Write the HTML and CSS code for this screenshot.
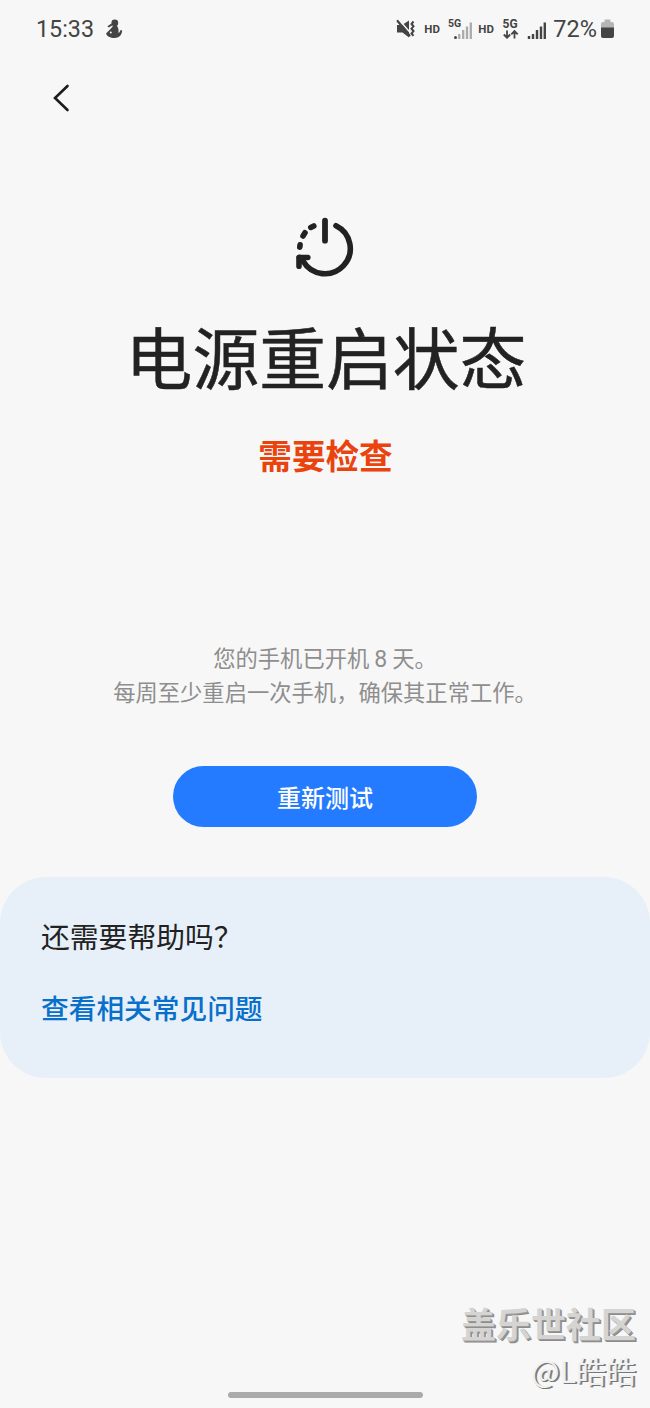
FILE: index.html
```html
<!DOCTYPE html>
<html lang="zh-CN">

<head>
    <meta charset="UTF-8">
    <meta name="viewport" content="width=device-width, initial-scale=1.0">
    <title>电源重启状态</title>
    <link rel="stylesheet" href="styles.css">
</head>

<body>
    <!-- Status bar -->
    <div class="status-bar">
        <span class="time">15:33</span>
        <svg class="notification" width="18" height="21" viewBox="0 0 18 21" fill="#444">
            <circle cx="9.8" cy="4" r="3.4" />
            <path d="M2.4 7.3 6.5 4.6l1.2 1.7-4 2.3z" />
            <path d="M8 7h4c1.600 2 1.800 4.500 1.500 7 1.200-.6 1.600-1.600 2-3l1.700.5c-.2 4.500-3.200 7.500-7.700 7.500C5.500 19 2 17.500 1 14.500L5.500 10z" />
            <circle cx="5.800" cy="13.600" r="1" fill="#f7f7f7" />
        </svg>
        <div class="status-icons">
            <svg class="mute" width="20" height="20" viewBox="0 0 20 20">
                <path d="M2 6h5l7-4.500v17L7.500 13.500H2z" fill="#444" />
                <path d="M4 .8 16 14.500" stroke="#f7f7f7" stroke-width="1.500" />
                <path d="M2.600 2 14.500 16.500" stroke="#444" stroke-width="2.200" stroke-linecap="round" />
                <path d="M18.500 2.500l-2 2.400 2 2.400-2 2.400 2 2.400-2 2.400 2 2.400" fill="none" stroke="#444" stroke-width="2" />
            </svg>
            <span class="hd">HD</span>
            <svg class="sim1" width="25" height="24" viewBox="0 0 25 24">
                <text x="0" y="10" class="net-label">5G</text>
                <circle cx="7.500" cy="20.500" r="1.500" fill="#444" />
                <path d="M11.300 22v-5M15.200 22v-9M19 22V9.500M22.800 22V5.500" stroke="#aaa" stroke-width="2.300" />
            </svg>
            <span class="hd">HD</span>
            <svg class="sim2" width="18" height="24" viewBox="0 0 18 24">
                <text x="0.5" y="11" class="net-label big">5G</text>
                <path d="M5 13.500v7M1.800 17.500l3.200 3.200 3.200-3.200M12.500 21.500v-7M9.300 17.300l3.200-3.200 3.200 3.200" fill="none" stroke="#444" stroke-width="1.800" />
            </svg>
            <svg class="bars" width="20" height="24" viewBox="0 0 20 24">
                <path d="M2 22v-3M6 22v-5M10 22v-9M14 22V9.500M17.800 22V5.500" stroke="#444" stroke-width="2.400" />
            </svg>
            <span class="percent">72%</span>
            <svg width="13" height="20" viewBox="0 0 13 20">
                <path d="M0 9V5q0-2 2-2h1.500V1.500Q3.500.5 4.500.5h4q1 0 1 1V3H11q2 0 2 2v4z" fill="#b5b5b5" />
                <path d="M0 8.500h13V17q0 2-2 2H2q-2 0-2-2z" fill="#444" />
            </svg>
        </div>
    </div>

    <div class="toolbar">
        <svg width="20" height="30" viewBox="0 0 20 30">
            <path d="M15.500 3 3 15l12.500 12" fill="none" stroke="#1c1c1c" stroke-width="2.600" stroke-linecap="round" />
        </svg>
    </div>

    <!-- Test result -->
    <div class="result">
        <svg class="restart-icon" width="60" height="60" viewBox="0 0 60 60" fill="none" stroke="#222" stroke-width="5.600" stroke-linecap="round" stroke-linejoin="round">
            <path d="M30 3.700v20" stroke-width="5.800" />
            <path d="M41 8.700A25.300 25.300 0 1 1 8.100 44.200L4.500 40.500" />
            <path d="M12.800 40.500H4v8.700" />
            <path d="M4.800 30.200l.3-2.400M8 19l2-3.200M15.800 10.400l3-1.500" />
        </svg>
        <h1>电源重启状态</h1>
        <p class="state">需要检查</p>
        <p class="description">您的手机已开机 <span class="days">8</span> 天。<br>每周至少重启一次手机，确保其正常工作。</p>
        <button class="retest">重新测试</button>
    </div>

    <!-- Help card -->
    <div class="help">
        <h2>还需要帮助吗？</h2>
        <a class="faq-link">查看相关常见问题</a>
    </div>

    <div class="watermark">
        <div class="community">盖乐世社区</div>
        <div class="author">@L皓皓</div>
    </div>
    <div class="home-bar"></div>
</body>

</html>
```

FILE: styles.css
```css
body {
    font-family: "Noto Sans CJK SC", sans-serif;
    margin: 0;
    height: 1408px;
    display: flex;
    flex-direction: column;
    background-color: #f7f7f7;
    color: #222;
    overflow: hidden;
}

svg {
    display: block;
    flex: none;
}

.status-bar {
    display: flex;
    align-items: center;
    height: 58px;
    padding: 0 36px;
    font-family: Roboto, sans-serif;
    color: #444;
}

.time {
    font-size: 23.3px;
    line-height: 28px;
    width: 69px;
}

.status-icons {
    display: flex;
    align-items: center;
    margin-left: auto;
}

.mute {
    margin-right: 9px;
}

.hd {
    width: 16px;
    font-size: 11.5px;
    font-weight: 700;
}

.sim1 {
    margin: 0 5px 0 8px;
}

.sim2 {
    margin: 0 7px 0 8px;
}

.net-label {
    font-family: Roboto, sans-serif;
    font-size: 10.5px;
    font-weight: 700;
    fill: #444;
}

.net-label.big {
    font-size: 12px;
}

.percent {
    margin: 0 4px 0 6px;
    font-size: 23.5px;
    line-height: 28px;
}

.toolbar {
    height: 77px;
    padding: 25px 0 0 52px;
    box-sizing: border-box;
}

.result {
    display: flex;
    flex-direction: column;
    align-items: center;
    padding-top: 82px;
    text-align: center;
}

h1 {
    margin: 30px 0 0;
    padding-left: 2px;
    font-size: 66.8px;
    line-height: 96px;
    font-weight: 400;
    -webkit-text-stroke: 0.5px #222;
}

.state {
    margin: 28px 0 0;
    padding-left: 1px;
    font-size: 33.6px;
    line-height: 48px;
    font-weight: 700;
    color: #ea430d;
}

.description {
    margin: 161px 0 0;
    font-size: 22.3px;
    line-height: 34px;
    font-weight: 400;
    color: #8e8e8e;
}

.days {
    font-family: Roboto, sans-serif;
    font-size: 23px;
    line-height: 1;
}

.retest {
    width: 304px;
    height: 61px;
    margin-top: 58px;
    padding: 0;
    border: none;
    border-radius: 31px;
    background-color: #247bff;
    color: #fff;
    font-family: inherit;
    font-size: 24px;
    font-weight: 500;
}

.help {
    height: 201px;
    margin-top: 50px;
    padding: 38px 41px 0;
    box-sizing: border-box;
    border-radius: 46px;
    background-color: #e7f0f8;
}

h2 {
    margin: 0;
    font-size: 28.8px;
    line-height: 42px;
    font-weight: 400;
}

.faq-link {
    display: block;
    margin-top: 30px;
    font-size: 27.7px;
    line-height: 40px;
    font-weight: 500;
    color: #0870cb;
}

.watermark {
    margin-top: auto;
    padding-right: 14px;
    text-align: right;
}

.community {
    font-size: 35px;
    line-height: 50px;
    font-weight: 700;
    color: #d6d4d3;
    text-shadow: 1px 1px #999, 2px 2px #8c8c8c;
}

.author {
    font-size: 30px;
    line-height: 44px;
    font-weight: 400;
    color: #f0f0f0;
    text-shadow: 1px 1px #777, 2px 1px #888;
}

.home-bar {
    flex: none;
    width: 195px;
    height: 6px;
    margin: 0 auto 10px;
    border-radius: 3px;
    background-color: #aaa;
}
```
